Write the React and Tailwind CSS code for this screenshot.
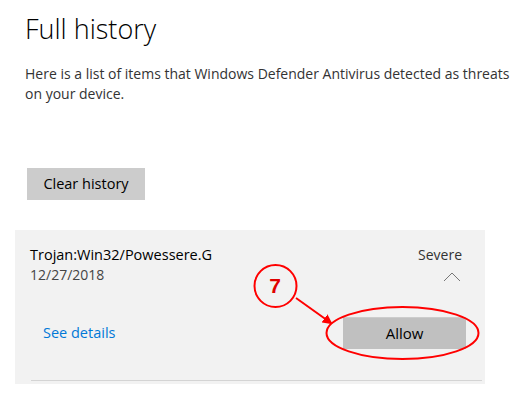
import React from "react";

export default function App() {
  return (
    <div className="relative w-[531px] h-[402px] bg-white overflow-hidden text-[#000]" style={{ fontFamily: '"Open Sans", "Noto Sans", sans-serif' }}>
      <div className="pl-[25px] pt-[11px]">
        <h1 className="text-[27px] font-light leading-[36px] text-black">Full history</h1>
        <p className="mt-[17px] text-[14px] leading-[20px] text-[#333] w-[495px]">
          Here is a list of items that Windows Defender Antivirus detected as threats on your device.
        </p>
        <button className="mt-[64px] ml-[2px] w-[118px] h-[32px] bg-[#cccccc] text-[14.5px] text-black">Clear history</button>
      </div>
      <div className="mt-[30px] ml-[15px] w-[470px] h-[154px] bg-[#f2f2f2] flex flex-col">
        <div className="flex justify-between pl-[15px] pr-[23px] pt-[15px]">
          <div>
            <div className="text-[14.5px] leading-[20px] text-black">Trojan:Win32/Powessere.G</div>
            <div className="text-[14px] leading-[20px] text-[#444]">12/27/2018</div>
          </div>
          <div className="flex flex-col items-end">
            <div className="text-[14px] leading-[20px] text-[#333]">Severe</div>
            <svg width="18" height="10" viewBox="0 0 18 10" className="mt-[7px] mr-[1px]">
              <path d="M1 9 L9 1 L17 9" fill="none" stroke="#777" strokeWidth="1" />
            </svg>
          </div>
        </div>
        <div className="flex items-center justify-between pl-[28px] pr-[19px] mt-[32px]">
          <a className="text-[14.5px] text-[#0078d7]">See details</a>
          <button className="w-[123px] h-[32px] bg-[#c0c0c0] border-t border-[#cccccc] text-[15px] text-black">Allow</button>
        </div>
        <div className="mt-auto mb-[3px] ml-[16px] mr-[3px] h-px bg-[#d4d4d4]" />
      </div>
      <svg className="absolute left-0 top-0 pointer-events-none" width="531" height="402" viewBox="0 0 531 402">
        <defs>
          <marker id="ah" markerWidth="10" markerHeight="10" refX="8" refY="5" orient="auto" markerUnits="userSpaceOnUse">
            <path d="M0 0 L10 5 L0 10 Z" fill="#ff0000" />
          </marker>
        </defs>
        <ellipse cx="402.5" cy="333" rx="76" ry="26" fill="none" stroke="#ff0000" strokeWidth="2" />
        <circle cx="275.5" cy="286" r="21" fill="none" stroke="#ff0000" strokeWidth="2" />
        <line x1="296" y1="298" x2="331" y2="323" stroke="#ff0000" strokeWidth="2" markerEnd="url(#ah)" />
      </svg>
      <div className="absolute left-[254px] top-[273px] w-[42px] text-center text-[21px] font-bold leading-[26px] text-[#e00000]" style={{ fontFamily: '"Liberation Sans", Arial, sans-serif' }}>7</div>
    </div>
  );
}
